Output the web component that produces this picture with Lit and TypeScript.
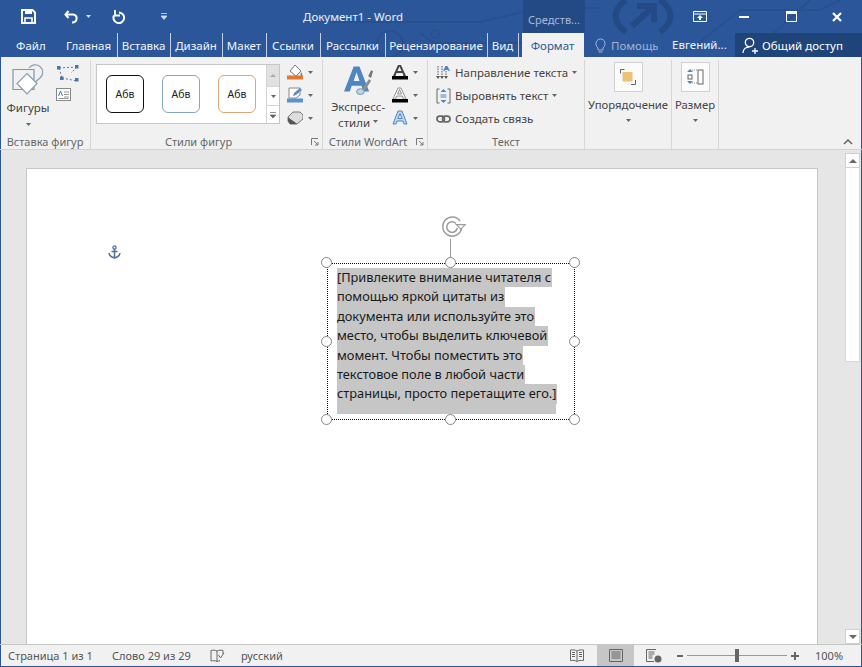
import { LitElement, css, html, svg } from 'lit'
import { customElement } from 'lit/decorators.js'

const tabs = [
  { label: 'Файл', w: 61, sep: false },
  { label: 'Главная', w: 57, sep: true },
  { label: 'Вставка', w: 53, sep: true },
  { label: 'Дизайн', w: 52, sep: true },
  { label: 'Макет', w: 44, sep: true },
  { label: 'Ссылки', w: 54, sep: true },
  { label: 'Рассылки', w: 65, sep: true },
  { label: 'Рецензирование', w: 102, sep: true },
  { label: 'Вид', w: 31, sep: true },
]

const lines = [
  '[Привлеките внимание читателя с',
  'помощью яркой цитаты из',
  'документа или используйте это',
  'место, чтобы выделить ключевой',
  'момент. Чтобы поместить это',
  'текстовое поле в любой части',
  'страницы, просто перетащите его.]',
]

const caret = html`<svg class="caret" width="5" height="3" viewBox="0 0 5 3"><path d="M0 0h5L2.500 3z" fill="#666"/></svg>`

const icons = {
  save: svg`<path d="M1 1h10.500L14 3.500V14H1z" fill="none" stroke="#fff" stroke-width="2"/><path d="M4 1h7v4H4z" fill="#fff"/><path d="M4 9h7v5H4z" fill="none" stroke="#fff" stroke-width="1.600"/>`,
  undo: svg`<path d="M4.500 2 1.500 5.500 4.500 9M2 5.500h7c5 0 5 8-1 8" fill="none" stroke="#fff" stroke-width="2"/>`,
  redo: svg`<path d="M8 3.500a5.300 5.300 0 1 1-5 3" fill="none" stroke="#fff" stroke-width="2"/><path d="M4 1v5.500h5" fill="none" stroke="#fff" stroke-width="1.800"/>`,
  shapes: svg`<path d="M17 4A7.500 7.500 0 1 1 28 14L21 20" fill="none" stroke="#8a9db2" stroke-width="1.200"/><path d="M1 5.500h21v20H1z" fill="none" stroke="#7b96b4" stroke-width="1.200"/><path d="M15 9.500l10 10-10 10.500L5 19.500z" fill="#fff" stroke="#8a9db2" stroke-width="1.200"/>`,
  edit: svg`<path d="M3 3 21 2M3 3l3 10M6 13l15 3M21 2l-6 6" stroke="#5a7a9f" stroke-width="1" stroke-dasharray="2 2" fill="none"/><g fill="#4a76a8"><rect x="1" y="1" width="3.500" height="3.500"/><rect x="19" y="0" width="3.500" height="3.500"/><rect x="4" y="11.500" width="3.500" height="3.500"/><rect x="19" y="13" width="3.500" height="3.500"/></g>`,
  textbox: svg`<rect x=".5" y=".5" width="14" height="12" fill="#fff" stroke="#888"/><path d="M2.500 8l2-5 2 5" stroke="#4a76a8" fill="none"/><path d="M8 4h5M8 6.500h5M8 9h5M2.500 10.500h10" stroke="#999"/>`,
  fill: svg`<path d="M8 1l6 6-5 5-6-5z" fill="#fff" stroke="#777"/><path d="M14 8c1 2 2 3 1 4s-2-1-1-4z" fill="#777"/><rect x="0" y="11.500" width="16" height="4" fill="#e07b2e"/>`,
  pen: svg`<path d="M2 1h11v7l-4 3H2z" fill="#fff" stroke="#888"/><path d="M6 9l1-3 6-5 2 2-6 5z" fill="#5b8fc4"/><rect x="0" y="11.500" width="16" height="4" fill="#5b93c7"/>`,
  effect: svg`<path d="M6 2h7l3 3v4l-6 5H3L1 11V7z" fill="#ddd" stroke="#777"/><path d="M1 7c3 3 6 4 9 7l-7 0-2-3z" fill="#555"/>`,
  bigA: svg`<path d="M10 1h6l10 26h-6l-2-6H8l-2 6H0zM10 16h6l-3-9z" fill="#4f86c0" fill-rule="evenodd"/><path d="M17 26l9-12 2 2-8 12z" fill="#8c8c8c"/><path d="M28 5l-3 6 3 2 2-7z" fill="#777"/><ellipse cx="17" cy="27" rx="4" ry="3" fill="#bcd3e8" stroke="#6a93bb"/>`,
  aFill: svg`<path d="M6 1h3l5 11h-2.500l-1-3H4.500l-1 3H1zM5.500 7h4L7.500 2.500z" fill="#444" fill-rule="evenodd"/><rect x="0" y="12" width="16" height="3.500"/>`,
  aLine: svg`<path d="M6 1h3l5 11h-2.500l-1-3H4.500l-1 3H1zM5.500 7h4L7.500 2.500z" fill="#fff" stroke="#777" stroke-width=".8"/><rect x="0" y="12" width="16" height="3.500"/>`,
  aGlow: svg`<path d="M6 1h4l5 13h-3l-1-3H5l-1 3H1zM6 8.500h4L8 3.500z" fill="#bcd6ee" stroke="#4f86c0" fill-rule="evenodd"/>`,
  direction: svg`<path d="M2 1v11M6 1v11M10 6v6" stroke="#555" stroke-dasharray="1.500 1" fill="none"/><path d="M9.500 1h2l2.500 5h-1.500l-.5-1h-3l-.5 1H7z" fill="#4f86c0"/><path d="M0 11l2 3 2-3zM4 11l2 3 2-3zM8 11l2 3 2-3z" fill="#555"/>`,
  align: svg`<path d="M3.500 1H1v14h2.500M11.500 1H14v14h-2.500" stroke="#666" fill="none"/><path d="M7.500 1l3 3h-6zM7.500 15l3-3h-6z" fill="#4f86c0"/><path d="M4.500 7h6M4.500 9h6" stroke="#4f86c0"/>`,
  link: svg`<rect x="1" y="3" width="8" height="6" rx="3" fill="none" stroke="#666" stroke-width="1.800"/><rect x="7" y="3" width="8" height="6" rx="3" fill="none" stroke="#666" stroke-width="1.800"/>`,
  arrange: svg`<path d="M.5 4.500V.5h4" stroke="#666" fill="none"/><rect x="2.500" y="3" width="10" height="9.500" fill="#edc274"/><path d="M15.500 11v4.500h-4.500" stroke="#666" fill="none"/>`,
  size: svg`<rect x="12" y="1" width="5" height="14" fill="#fff" stroke="#666"/><path d="M4 0l3 3H1zM4 15l3-3H1z" fill="#4f86c0"/><rect x="2" y="6" width="4" height="4" fill="none" stroke="#666"/><path d="M6 1h5M6 14h5" stroke="#888" stroke-dasharray="1 1"/>`,
  launcher: svg`<path d="M.5 7V.5H7" stroke="#777" fill="none"/><path d="M3 3l4 4M7 4v3H4" stroke="#777" fill="none"/>`,
}

@customElement('app-root')
export default class AppRoot extends LitElement {
  private _icon(body: unknown, w: number, h: number, vw = w, vh = h) {
    return html`<svg width=${w} height=${h} viewBox="0 0 ${vw} ${vh}">${body}</svg>`
  }

  private _titleBar() {
    return html`
      <div class="titlebar">
        <svg class="circuit" width="862" height="57" viewBox="0 0 862 57">
          <g fill="none" stroke="#27508f" stroke-width="2">
            <path d="M330 22h90l60 0 60 -14h60"/>
            <path d="M420 33l14 10h90l30-30h10"/>
            <circle cx="390" cy="44" r="13"/>
            <circle cx="435" cy="34" r="4"/>
            <path d="M690 50l50-40h80l20-10"/>
            <path d="M760 46l50-46"/>
          </g>
          <g fill="none" stroke="#234a85" stroke-width="6">
            <path d="M626 0c-14 10-14 22 0 32M660 0c14 10 14 22 0 32"/>
            <path d="M632 26l22-20M637 6h17v16"/>
          </g>
        </svg>
        <span class="qa save">${this._icon(icons.save, 15, 15)}</span>
        <span class="qa undo">${this._icon(icons.undo, 15, 15)}</span>
        <svg class="wcaret" width="5" height="3" viewBox="0 0 5 3"><path d="M0 0h5L2.500 3z" fill="#cfdbec"/></svg>
        <span class="qa redo">${this._icon(icons.redo, 15, 15)}</span>
        <svg class="custom" width="6" height="7" viewBox="0 0 6 7"><path d="M0 .5h6M0 3h6L3 6.500z" stroke="#cfdbec" fill="#cfdbec" stroke-width=".8"/></svg>
        <span class="doc-title">Документ1 - Word</span>
        <span class="context">Средств...</span>
        <span class="win display"><svg width="14" height="12" viewBox="0 0 14 12"><path d="M.5.500h13v10H.5zM.5 3h13" stroke="#fff" fill="none"/><path d="M7 4l3 3H8v2H6V7H4z" fill="#fff"/></svg></span>
        <span class="win min"><svg width="10" height="2"><rect width="10" height="2" fill="#fff"/></svg></span>
        <span class="win max"><svg width="11" height="11" viewBox="0 0 11 11"><path d="M.5 2.500h10v8H.5z" fill="none" stroke="#fff"/><rect width="11" height="2.500" fill="#fff"/></svg></span>
        <span class="win close"><svg width="10" height="10" viewBox="0 0 10 10"><path d="M1 1l8 8M9 1l-8 8" stroke="#fff" stroke-width="2.200"/></svg></span>
      </div>`
  }

  private _tabs() {
    return html`
      <div class="tabs">
        ${tabs.map(t => html`<span class="tab ${t.sep ? 'sep' : 'first'}" style="width:${t.w}px">${t.label}</span>`)}
        <span class="tab active">Формат</span>
        <span class="help">
          <svg width="11" height="15" viewBox="0 0 11 15"><path d="M3 10C-1 6 1.500 1 5.500 1S12 6 8 10v2H3zM3.500 14h4" fill="none" stroke="#9fb5d3"/></svg>
          <span>Помощь</span>
        </span>
        <span class="user">Евгений...</span>
        <span class="share">
          <svg width="17" height="17" viewBox="0 0 17 17"><circle cx="7.500" cy="5.500" r="4.200" fill="none" stroke="#fff" stroke-width="1.300"/><path d="M1 16c0-4 3-6 6.500-6M10 14h6M13 11v6" fill="none" stroke="#fff" stroke-width="1.300"/></svg>
          Общий доступ
        </span>
      </div>`
  }

  private _ribbon() {
    return html`
      <div class="ribbon">
        <section class="group" style="width:91px">
          <div class="body shapes-body">
            <div class="big shapes">
              ${this._icon(icons.shapes, 32, 33)}
              <span>Фигуры</span>
              ${caret}
            </div>
            <div class="small-icons">
              ${this._icon(icons.edit, 24, 17)}
              ${this._icon(icons.textbox, 15, 13)}
            </div>
          </div>
          <div class="label">Вставка фигур</div>
        </section>

        <section class="group" style="width:232px">
          <div class="body styles-body">
            <div class="gallery">
              <div class="swatch black">Абв</div>
              <div class="swatch blue">Абв</div>
              <div class="swatch orange">Абв</div>
              <div class="scroll">
                <span class="off"><svg width="6" height="3" viewBox="0 0 6 3"><path d="M0 3h6L3 0z" fill="#aaa"/></svg></span>
                <span>${caret}</span>
                <span class="more"><svg width="6" height="6" viewBox="0 0 6 6"><path d="M0 .5h6M0 3h6L3 6z" stroke="#666" fill="#666" stroke-width=".7"/></svg></span>
              </div>
            </div>
            <div class="tools">
              <div>${this._icon(icons.fill, 16, 16)}${caret}</div>
              <div>${this._icon(icons.pen, 16, 16)}${caret}</div>
              <div>${this._icon(icons.effect, 16, 16)}${caret}</div>
            </div>
          </div>
          <div class="label with-launcher">Стили фигур<span class="launcher">${this._icon(icons.launcher, 8, 8)}</span></div>
        </section>

        <section class="group" style="width:105px">
          <div class="body art-body">
            <div class="big art">
              ${this._icon(icons.bigA, 29, 31, 30, 31)}
              <span>Экспресс-</span>
              <span>стили ${caret}</span>
            </div>
            <div class="tools tight">
              <div>${this._icon(icons.aFill, 16, 16)}${caret}</div>
              <div>${this._icon(icons.aLine, 16, 16)}${caret}</div>
              <div>${this._icon(icons.aGlow, 16, 16)}${caret}</div>
            </div>
          </div>
          <div class="label with-launcher art-label">Стили WordArt<span class="launcher">${this._icon(icons.launcher, 8, 8)}</span></div>
        </section>

        <section class="group" style="width:157px">
          <div class="body text-body">
            <div class="row">${this._icon(icons.direction, 15, 16)}<span>Направление текста</span>${caret}</div>
            <div class="row">${this._icon(icons.align, 15, 16)}<span>Выровнять текст</span>${caret}</div>
            <div class="row">${this._icon(icons.link, 15, 12, 16, 12)}<span>Создать связь</span></div>
          </div>
          <div class="label">Текст</div>
        </section>

        <section class="group" style="width:87px">
          <div class="body">
            <div class="big boxed">
              <div class="box">${this._icon(icons.arrange, 16, 16)}</div>
              <span>Упорядочение</span>
              ${caret}
            </div>
          </div>
          <div class="label"></div>
        </section>

        <section class="group" style="width:47px">
          <div class="body">
            <div class="big boxed">
              <div class="box">${this._icon(icons.size, 18, 16)}</div>
              <span>Размер</span>
              ${caret}
            </div>
          </div>
          <div class="label"></div>
        </section>

        <svg class="collapse" width="10" height="6" viewBox="0 0 10 6"><path d="M1 5l4-4 4 4" fill="none" stroke="#666" stroke-width="1.500"/></svg>
      </div>`
  }

  private _textBox() {
    const handles = ['tl', 'tc', 'tr', 'ml', 'mr', 'bl', 'bc', 'br']
    return html`
      <div class="textbox">
        <div class="rot-line"></div>
        <svg class="rot" width="28" height="22" viewBox="0 0 28 22">
          <path d="M20 5A9.500 9.500 0 1 0 21.500 13" fill="none" stroke="#9c9c9c" stroke-width="1.500"/>
          <path d="M16 7.500A5.300 5.300 0 1 0 17.300 12" fill="none" stroke="#9c9c9c" stroke-width="1.500"/>
          <path d="M15 8h11.500l-5.700 6z" fill="#9c9c9c"/>
          <path d="M17.800 9.200h6l-3 3.100z" fill="#fff"/>
        </svg>
        ${handles.map(h => html`<span class="handle ${h}"></span>`)}
        <div class="selected-text">
          ${lines.map(l => html`<div class="line">${l}</div>`)}
          <div class="tail"></div>
        </div>
      </div>`
  }

  private _statusBar() {
    return html`
      <div class="status">
        <span class="s1">Страница 1 из 1</span>
        <span class="s2">Слово 29 из 29</span>
        <svg class="s3" width="15" height="14" viewBox="0 0 15 14"><path d="M7 2C5 1 3 1 1 1.500V12c2-.5 4-.5 6 .5V2zM7 2c2-1 4-1 6-.5V5M7 12.500c1-.5 2-.7 3-.7" fill="none" stroke="#666"/><path d="M8.500 6l2 3 3.500-5" fill="none" stroke="#666"/></svg>
        <span class="s4">русский</span>
        <span class="views read">
          <svg width="14" height="13" viewBox="0 0 14 13"><path d="M7 2C5 .8 3 .8 .5 1v10.500c2.500-.2 4.500-.2 6.500 1 2-1.200 4-1.200 6.500-1V1C11 .8 9 .8 7 2zM7 2v10M2 3.500h3M2 5.500h3M2 7.500h3M9 3.500h3M9 5.500h3M9 7.500h3" fill="none" stroke="#666"/></svg>
        </span>
        <span class="views active">
          <svg width="14" height="13" viewBox="0 0 14 13"><path d="M.5.500h13v12H.5zM2.500 3h9M2.500 5h9M2.500 7h9M2.500 9h9" fill="none" stroke="#666"/></svg>
        </span>
        <span class="views web">
          <svg width="16" height="14" viewBox="0 0 16 14"><path d="M10 .500H.5v12H8M2.500 3h6M2.500 5h6M2.500 7h4M2.500 9h4" fill="none" stroke="#666"/><circle cx="12" cy="10" r="3.500" fill="#666"/></svg>
        </span>
        <span class="zoom">
          <span class="minus"></span>
          <span class="track"><i></i></span>
          <span class="plus"></span>
        </span>
        <span class="pct">100%</span>
      </div>`
  }

  render() {
    return html`
      ${this._titleBar()}
      ${this._tabs()}
      ${this._ribbon()}
      <div class="workspace">
        <div class="canvas">
          <div class="page">
            <svg class="anchor" width="13" height="14" viewBox="0 0 13 14"><circle cx="6.500" cy="2.500" r="1.600" fill="none" stroke="#4d7199" stroke-width="1.300"/><path d="M6.500 4v9M3.500 6.500h6M1 8c.5 3 3 4.500 5.500 5 2.500-.5 5-2 5.500-5" fill="none" stroke="#4d7199" stroke-width="1.500"/></svg>
            ${this._textBox()}
          </div>
        </div>
        <div class="scrollbar">
          <span class="sb-btn up"><svg width="8" height="4" viewBox="0 0 8 4"><path d="M0 4h8L4 0z" fill="#666"/></svg></span>
          <span class="thumb"></span>
          <span class="sb-btn down"><svg width="8" height="4" viewBox="0 0 8 4"><path d="M0 0h8L4 4z" fill="#666"/></svg></span>
        </div>
      </div>
      ${this._statusBar()}
    `
  }

  static styles = css`
:host {
  display: flex;
  flex-direction: column;
  width: 862px;
  height: 667px;
  overflow: hidden;
  position: relative;
  font-family: "Noto Sans", "Open Sans", sans-serif;
  font-size: 11.5px;
  color: #444;
  background: #2b579a;
}
svg {
  display: block;
  flex: none;
}

.titlebar {
  height: 33px;
  display: flex;
  align-items: center;
  position: relative;
  color: #e9eff8;
}
.titlebar > * {
  position: relative;
}
.titlebar > .circuit {
  position: absolute;
  left: 0;
  top: 0;
}
.qa.save { margin-left: 21px; }
.qa.undo { margin-left: 28px; }
.wcaret { margin-left: 7px; }
.qa.redo { margin-left: 20px; }
.custom { margin-left: 35px; }
.doc-title {
  margin-left: 136px;
  width: 102px;
  font-size: 11.5px;
  white-space: nowrap;
}
.context {
  margin-left: 118px;
  width: 62px;
  height: 33px;
  line-height: 39px;
  text-align: center;
  background: #234a85;
  color: #a5b9d7;
  white-space: nowrap;
  font-size: 11px;
}
.win.display { margin-left: 108px; }
.win.min { margin-left: 32px; }
.win.max { margin-left: 37px; }
.win.close { margin-left: 35px; }

.tabs {
  height: 24px;
  display: flex;
  align-items: stretch;
  position: relative;
  color: #f2f5fa;
  white-space: nowrap;
}
.tab {
  display: flex;
  align-items: center;
  justify-content: center;
  padding-right: 1px;
  box-sizing: border-box;
}
.tab.sep { border-right: 1px solid #c3d0e4; }
.tab.first {
  justify-content: flex-start;
  padding-left: 16px;
}
.tab.active {
  margin-left: 3px;
  width: 62px;
  background: #f1f1f1;
  color: #2b579a;
}
.help {
  display: flex;
  align-items: center;
  gap: 5px;
  margin-left: 11px;
  width: 63px;
  overflow: hidden;
  color: #9fb5d3;
}
.user {
  margin-left: 14px;
  width: 63px;
  line-height: 24px;
}
.share {
  display: flex;
  align-items: center;
  gap: 3px;
  width: 127px;
  padding-left: 7px;
  box-sizing: border-box;
  background: #1f4479;
  color: #fff;
  font-size: 11.5px;
}

.ribbon {
  height: 93px;
  display: flex;
  box-sizing: border-box;
  background: #f1f1f1;
  border-bottom: 1px solid #d2d2d2;
  box-shadow: inset 1px 0 0 #2b579a, inset -1px 0 0 #2b579a;
}
.group {
  display: flex;
  flex-direction: column;
  box-sizing: border-box;
  margin: 3px 0 0;
  border-right: 1px solid #d6d6d6;
  position: relative;
}
.body {
  flex: 1;
  display: flex;
  min-height: 0;
}
.label {
  height: 14px;
  line-height: 14px;
  text-align: center;
  color: #666;
  font-size: 11px;
  white-space: nowrap;
}
.with-launcher { padding-right: 16px; }
.art-label { padding-right: 14px; }
.launcher {
  position: absolute;
  right: 3px;
  bottom: 3px;
}
.big {
  display: flex;
  flex-direction: column;
  align-items: center;
  line-height: 16px;
  white-space: nowrap;
}
.shapes {
  width: 56px;
  padding-top: 4px;
}
.shapes span { margin-top: 3px; }
.big .caret { margin-top: 7px; }
.small-icons {
  display: flex;
  flex-direction: column;
  gap: 6px;
  padding-top: 5px;
}
.styles-body {
  padding: 4px 0 0 5px;
}
.gallery {
  width: 184px;
  height: 60px;
  box-sizing: border-box;
  border: 1px solid #c6c6c6;
  background: #fff;
  display: flex;
  padding-left: 9px;
  gap: 18px;
  position: relative;
}
.swatch {
  flex: none;
  width: 38px;
  height: 38px;
  margin-top: 10px;
  box-sizing: border-box;
  border-radius: 6px;
  text-align: center;
  line-height: 36px;
  font-size: 10.500px;
  color: #222;
}
.black { border: 1.500px solid #111; }
.blue { border: 1.500px solid #86a8be; }
.orange { border: 1.500px solid #d9a677; }
.scroll {
  margin-left: -8px;
  width: 13px;
  flex: none;
  box-sizing: border-box;
  display: flex;
  flex-direction: column;
  border-left: 1px solid #d4d4d4;
}
.scroll span {
  display: flex;
  align-items: center;
  justify-content: center;
  background: #fff;
  height: 18px;
  border-bottom: 1px solid #d4d4d4;
}
.scroll .off {
  height: 21px;
  background: #e1e1e1;
}
.scroll .more {
  flex: 1;
  border-bottom: 0;
}
.tools {
  margin-left: 7px;
  display: flex;
  flex-direction: column;
  gap: 7px;
}
.tools div {
  display: flex;
  align-items: center;
  gap: 5px;
}
.art-body { padding-left: 6px; }
.art {
  width: 58px;
  padding-top: 5px;
}
.art svg:first-child { margin-bottom: 3px; }
.art span {
  display: flex;
  align-items: center;
  gap: 3px;
}
.art span .caret { margin-top: 0; }
.tools.tight {
  margin-left: 5px;
  padding-top: 4px;
}
.text-body {
  flex-direction: column;
  padding: 1px 0 0 8px;
}
.row {
  height: 23px;
  display: flex;
  align-items: center;
  gap: 4px;
  white-space: nowrap;
}
.boxed {
  width: 100%;
  padding-top: 2px;
  font-size: 11.300px;
}
.box {
  width: 29px;
  height: 30px;
  box-sizing: border-box;
  border: 1px solid #d0d0d0;
  background: #fbfbfb;
  display: flex;
  align-items: center;
  justify-content: center;
  margin-bottom: 5px;
}
.boxed .caret { margin-top: 6px; }
.collapse {
  margin: auto 0 4px 124px;
}

.workspace {
  flex: 1;
  display: flex;
  min-height: 0;
  background: #e6e6e6;
  box-shadow: inset 1px 0 0 #2b579a, inset -1px 0 0 #2b579a;
}
.canvas {
  flex: 1;
  display: flex;
  padding: 18px 27px 0 26px;
}
.page {
  flex: 1;
  background: #fff;
  border: 1px solid #c6c6c6;
  border-bottom: 0;
  position: relative;
}
.anchor {
  position: absolute;
  left: 81px;
  top: 76px;
}
.textbox {
  position: absolute;
  left: 300px;
  top: 94px;
  width: 248px;
  height: 157px;
  box-sizing: border-box;
  border: 1px dotted #111;
  padding: 4px 0 0 9px;
  color: #1a1a1a;
  font-size: 12.800px;
}
.line {
  width: fit-content;
  height: 19.400px;
  line-height: 19.400px;
  padding-right: 1px;
  background: #c6c6c6;
  white-space: nowrap;
}
.tail {
  width: 219px;
  height: 10px;
  background: #c6c6c6;
}
.handle {
  position: absolute;
  width: 11px;
  height: 11px;
  box-sizing: border-box;
  border: 1.500px solid #858585;
  border-radius: 50%;
  background: #fff;
}
.tl, .ml, .bl { left: -7.500px; }
.tc, .bc { left: 116.500px; }
.tr, .mr, .br { right: -5.500px; }
.tl, .tc, .tr { top: -7.500px; }
.ml, .mr { top: 71.500px; }
.bl, .bc, .br { bottom: -5.500px; }
.rot-line {
  position: absolute;
  left: 121.500px;
  top: -25px;
  width: 1px;
  height: 21px;
  background: #999;
}
.rot {
  position: absolute;
  left: 112px;
  top: -48px;
}

.scrollbar {
  width: 17px;
  display: flex;
  flex-direction: column;
  padding-top: 3px;
  box-sizing: border-box;
}
.sb-btn {
  width: 15px;
  height: 15px;
  background: #fff;
  border: 1px solid #d0d0d0;
  box-sizing: border-box;
  display: flex;
  align-items: center;
  justify-content: center;
}
.thumb {
  width: 15px;
  height: 194px;
  background: #fff;
  border: 1px solid #d8d8d8;
  border-top: 0;
  box-sizing: border-box;
}
.down { margin-top: auto; }

.status {
  height: 23px;
  display: flex;
  align-items: center;
  box-sizing: border-box;
  background: #f1f1f1;
  border-top: 1px solid #c6c6c6;
  border-bottom: 1px solid #2b579a;
  box-shadow: inset 1px 0 0 #2b579a, inset -1px 0 0 #2b579a;
  white-space: nowrap;
  color: #555;
  font-size: 11px;
}
.s1 { margin-left: 8px; width: 104px; }
.s2 { width: 98px; }
.s3 { margin-right: 16px; }
.s4 { width: 42px; }
.views {
  height: 100%;
  display: flex;
  align-items: center;
  justify-content: center;
}
.views.read {
  margin-left: 287px;
  width: 14px;
}
.views.active {
  margin-left: 13px;
  width: 37px;
  background: #c6c6c6;
}
.views.web {
  margin-left: 12px;
  width: 16px;
}
.zoom {
  margin-left: 15px;
  display: flex;
  align-items: center;
  gap: 4px;
}
.minus {
  width: 6px;
  height: 2px;
  background: #666;
}
.track {
  width: 100px;
  height: 1px;
  background: #999;
  position: relative;
}
.track i {
  position: absolute;
  left: 48px;
  top: -6px;
  width: 4px;
  height: 13px;
  background: #666;
}
.plus {
  width: 8px;
  height: 8px;
  background:
    linear-gradient(#666, #666) center / 8px 2px no-repeat,
    linear-gradient(#666, #666) center / 2px 8px no-repeat;
}
.pct { margin-left: 16px; }
`
}

declare global {
  interface HTMLElementTagNameMap {
    'app-root': AppRoot
  }
}
